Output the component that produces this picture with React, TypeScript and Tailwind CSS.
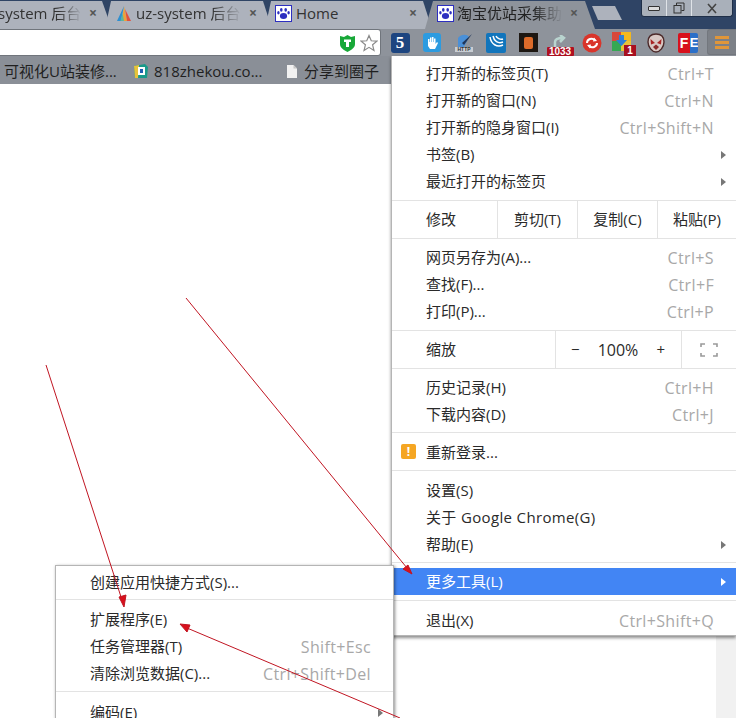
import React from "react";

const font = { fontFamily: '"Open Sans","Noto Sans CJK SC",sans-serif' };

function Row({ label, short, arrow, active, icon, wide }: { label: string; short?: string; arrow?: boolean; active?: boolean; icon?: React.ReactNode; wide?: boolean }) {
  return (
    <div className={`relative flex h-[27px] items-center pl-[34px] pr-[22px] ${active ? "bg-[#4285f4] text-white" : "text-[#2a2a2a]"}`}>
      {icon}
      <span className={`flex-1 whitespace-nowrap ${wide ? "tracking-[0.35px]" : ""}`}>{label}</span>
      {short && <span className="whitespace-nowrap text-[16px] tracking-[0.35px] text-[#a8a8a8]">{short}</span>}
      {arrow && (
        <span className={`absolute right-[10px] top-[10px] h-0 w-0 border-y-[4px] border-l-[5px] border-y-transparent ${active ? "border-l-white" : "border-l-[#777]"}`} />
      )}
    </div>
  );
}

const Sep = () => <div className="h-px bg-[#e3e3e3]" />;

function Tab({ children, cls, clip, active }: { children: React.ReactNode; cls: string; clip: string; active?: boolean }) {
  return (
    <div className={`flex h-[28px] shrink-0 items-center self-end pb-[4px] ${cls} ${clip} ${active ? "bg-[#8e939b]" : "bg-[#adb2bc]"}`}>{children}</div>
  );
}

const Close = ({ cls = "mr-[15px]" }: { cls?: string }) => <span className={`ml-auto text-[14px] font-bold leading-none text-[#555] ${cls}`}>×</span>;

const Paw = () => (
  <svg width="17" height="17" viewBox="0 0 17 17" className="shrink-0">
    <rect x="0.5" y="0.5" width="16" height="16" fill="#fff" stroke="#2d2fc0" />
    <g fill="#2d2fc0">
      <ellipse cx="8.5" cy="11" rx="3.6" ry="3" />
      <ellipse cx="6.3" cy="4.8" rx="1.3" ry="1.9" />
      <ellipse cx="10.7" cy="4.8" rx="1.3" ry="1.9" />
      <ellipse cx="3.4" cy="7.8" rx="1.2" ry="1.7" />
      <ellipse cx="13.6" cy="7.8" rx="1.2" ry="1.7" />
    </g>
  </svg>
);

function Ext({ children }: { children: React.ReactNode }) {
  return <div className="flex w-[32px] shrink-0 items-center justify-center">{children}</div>;
}

const fade = "[mask-image:linear-gradient(to_right,black_72%,transparent)]";

function App() {
  return (
    <div className="relative h-[718px] w-[736px] overflow-hidden bg-white text-[15px]" style={font}>
      {/* Tab strip */}
      <div className="relative flex h-[29px] bg-[#2f4465]">
        <Tab cls="w-[112px] z-[1]" clip="[clip-path:polygon(0_0,102px_0,112px_100%,0_100%)]">
          <span className={`ml-[-2px] w-[84px] overflow-hidden whitespace-nowrap text-[#333] ${fade}`}>system 后台</span>
          <Close />
        </Tab>
        <Tab cls="ml-[-7px] w-[167px] pl-[11px] z-[2]" clip="[clip-path:polygon(6px_0,158px_0,167px_100%,0_100%)]">
          <svg width="16" height="17" viewBox="0 0 16 17" className="shrink-0">
            <path d="M8 1 L11 16 H6 Z" fill="#eca13a" />
            <path d="M8 1 L1 16 H5 Z" fill="#2f8fd0" />
            <path d="M9 4 L15 16 H11 Z" fill="#e2503c" />
            <path d="M6.5 8 L8 16 H4.5 Z" fill="#5ab5a0" />
          </svg>
          <span className={`ml-[4px] w-[106px] overflow-hidden whitespace-nowrap text-[#333] ${fade}`}>uz-system 后台</span>
          <Close />
        </Tab>
        <Tab cls="ml-[-7px] w-[167px] pl-[10px] z-[3]" clip="[clip-path:polygon(6px_0,158px_0,167px_100%,0_100%)]">
          <Paw />
          <span className="ml-[4px] text-[#333]">Home</span>
          <Close />
        </Tab>
        <Tab active cls="ml-[-7px] w-[170px] pl-[12px] z-[4]" clip="[clip-path:polygon(8px_0,160px_0,170px_100%,0_100%)]">
          <Paw />
          <span className={`ml-[3px] w-[106px] overflow-hidden whitespace-nowrap text-[#222] ${fade}`}>淘宝优站采集助</span>
          <Close cls="mr-[17px]" />
        </Tab>
        <div className="ml-[-3px] mt-[6px] h-[14px] w-[30px] bg-[#adb2bc] [clip-path:polygon(0_0,23px_0,30px_100%,6px_100%)]" />
        <div className="ml-[19px] flex h-[17px] w-[92px] overflow-hidden rounded-b-[3px] border border-t-0 border-[#1f2f48] bg-[#a9b0ba] text-[#333]">
          <div className="flex w-[25px] items-center justify-center border-r border-[#dfe3e8]">
            <div className="h-[5px] w-[12px] rounded-[1px] border border-[#333] bg-[#ddd]" />
          </div>
          <div className="flex w-[25px] items-center justify-center border-r border-[#dfe3e8]">
            <svg width="12" height="12" viewBox="0 0 12 12" fill="none" stroke="#333"><rect x="1" y="3.5" width="7" height="7.5" /><path d="M3.5 3V1H11V8.5H8.5" /></svg>
          </div>
          <div className="flex flex-1 items-center justify-center">
            <svg width="12" height="11" viewBox="0 0 12 11" fill="none" stroke="#444" strokeWidth="1.6"><path d="M2 1 L10 10 M10 1 L2 10" /></svg>
          </div>
        </div>
      </div>

      {/* Toolbar */}
      <div className="flex h-[27px] bg-[#8e939b]">
        <div className="relative z-[5] flex h-[27px] w-[381px] shrink-0 items-center justify-end rounded-r-[3px] border border-l-0 border-[#70757c] bg-white pr-[2px]">
          <svg width="17" height="18" viewBox="0 0 17 18" className="mr-[4px]">
            <path d="M1 2 L5 3 L8.5 1 L12 3 L16 2 V10 C16 14 12 16 8.5 18 C5 16 1 14 1 10 Z" fill="#18a838" />
            <path d="M5 5.5 H12 V8 H10 V13 H7 V8 H5 Z" fill="#fff" />
          </svg>
          <svg width="18" height="18" viewBox="0 0 24 24" fill="#fff" stroke="#8a8a8a" strokeWidth="1.6">
            <path d="M12 2 L15 9 L22.5 9.5 L16.8 14.4 L18.6 22 L12 17.8 L5.4 22 L7.2 14.4 L1.5 9.5 L9 9 Z" />
          </svg>
        </div>
        <div className="ml-[3px] flex h-[27px]">
          <Ext>
            <div className="flex h-[20px] w-[19px] items-center justify-center rounded-[3px] bg-[#1d4580] text-[17px] font-bold leading-none text-white" style={{ fontFamily: '"Liberation Serif",serif' }}>5</div>
          </Ext>
          <Ext>
            <div className="flex h-[19px] w-[18px] items-center justify-center rounded-[3px] bg-[#2c9be0]">
              <svg width="12" height="14" viewBox="0 0 12 14" fill="#fff"><path d="M2 6 V3 H3.5 V6 H4 V1.5 H5.5 V6 H6 V1 H7.5 V6 H8 V2.5 H9.5 V8 L11 6 L12 7 L9 13 H4 L2 10 Z" /></svg>
            </div>
          </Ext>
          <Ext>
            <svg width="20" height="20" viewBox="0 0 20 20">
              <path d="M4 5 C7 1 13 1 15 4 L10 14 H4 Z" fill="#4a90d8" />
              <path d="M18 1 L10 12 L8 10 Z" fill="#20365a" />
              <rect x="1" y="14" width="18" height="5" fill="#c9ced4" />
              <text x="10" y="18.4" fontSize="5" fontWeight="700" textAnchor="middle" fill="#333" fontFamily="Liberation Sans">HTTP</text>
            </svg>
          </Ext>
          <Ext>
            <svg width="20" height="20" viewBox="0 0 20 20" fill="none">
              <rect width="20" height="20" rx="2" fill="#1175bc" />
              <path d="M4 4 C5 11 11 15 17 12 M7 3 C8 8 12 11 17 9 M10 3 C11 5 14 7 17 6" stroke="#fff" strokeWidth="1.5" />
            </svg>
          </Ext>
          <Ext>
            <div className="flex h-[19px] w-[19px] items-center justify-center bg-[#1d1712]">
              <div className="h-[12px] w-[9px] rounded-[2px] bg-[#dc6b2a]" />
            </div>
          </Ext>
          <Ext>
            <div className="relative h-[27px] w-[27px]">
              <svg width="18" height="14" viewBox="0 0 18 14" className="absolute left-[5px] top-[6px]" fill="none" stroke="#b9d4cf" strokeWidth="2.5">
                <path d="M3 12 V7 C3 4 6 3 11 3 M8 0 L12 3 L8 7" />
              </svg>
              <div className="absolute left-0 top-[18px] h-[9px] w-[27px] rounded-[1px] bg-[#b01020] text-center text-[10px] font-bold leading-[9px] text-white" style={{ fontFamily: '"Liberation Sans",sans-serif' }}>1033</div>
            </div>
          </Ext>
          <Ext>
            <svg width="20" height="20" viewBox="0 0 20 20" fill="none">
              <circle cx="10" cy="10" r="9.5" fill="#d9352b" />
              <path d="M5 10 C5 6 10 4.5 13 7 M15 10 C15 14 10 15.5 7 13" stroke="#fff" strokeWidth="2" />
              <path d="M12 4.5 L15 8 L11 8.5 Z M8 15.5 L5 12 L9 11.5 Z" fill="#fff" />
            </svg>
          </Ext>
          <Ext>
            <div className="relative h-[27px] w-[24px]">
              <svg width="19" height="19" viewBox="0 0 19 19" className="absolute left-0 top-[3px]">
                <rect width="10" height="10" fill="#d9483b" />
                <rect x="9" width="10" height="10" fill="#f2b81f" />
                <rect y="9" width="10" height="10" fill="#35a853" />
                <rect x="9" y="9" width="10" height="10" fill="#e8c33a" />
                <path d="M7 3 H12 V8 H15 L9.5 14 L4 8 H7 Z" fill="#2d7fd8" />
              </svg>
              <div className="absolute bottom-0 right-0 h-[11px] w-[12px] bg-[#a81020] text-center text-[10px] font-bold leading-[11px] text-white" style={{ fontFamily: '"Liberation Sans",sans-serif' }}>1</div>
            </div>
          </Ext>
          <Ext>
            <svg width="18" height="20" viewBox="0 0 18 20">
              <path d="M9 1 C14 1 17 4 17 9 C17 14 13 19 9 19 C5 19 1 14 1 9 C1 4 4 1 9 1 Z" fill="#d8c8c4" stroke="#4c2a2a" strokeWidth="1.4" />
              <path d="M3.5 6 L8 10 L4 11.5 Z M14.5 6 L10 10 L14 11.5 Z" fill="#a82424" />
              <path d="M6 14 L9 11.5 L12 14 L9 17 Z" fill="#8a2a2a" />
            </svg>
          </Ext>
          <Ext>
            <div className="flex h-[20px] w-[20px] overflow-hidden rounded-[2px]" style={{ fontFamily: '"Liberation Sans",sans-serif' }}>
              <span className="flex w-[12px] items-center justify-center bg-[#d8101c] text-[14px] font-bold leading-none text-white">F</span>
              <span className="flex w-[8px] items-center justify-center bg-[#2a6fc8] text-[13px] font-bold leading-none text-white">E</span>
            </div>
          </Ext>
        </div>
        <div className="ml-[3px] flex h-[26px] w-[29px] flex-col items-center justify-center gap-[2px] rounded-l-[3px] border border-r-0 border-[#73777e] bg-[#7c8087]">
          <div className="h-[3px] w-[14px] bg-[#e0963a]" />
          <div className="h-[3px] w-[14px] bg-[#e0963a]" />
          <div className="h-[3px] w-[14px] bg-[#e0963a]" />
        </div>
      </div>

      {/* Bookmarks */}
      <div className="flex h-[28px] items-center whitespace-nowrap bg-[#8a8f97] pt-[2px] text-[#1f1f1f]">
        <span className="ml-[4px] w-[113px] overflow-hidden">可视化U站装修...</span>
        <svg width="16" height="16" viewBox="0 0 16 16" className="ml-[16px] shrink-0">
          <path d="M1 3 L12 1 L15 4 L14 15 L2 15 Z" fill="#1a9a8a" />
          <path d="M1 3 L6 2 L5 15 L2 15 Z" fill="#e8c33a" />
          <rect x="5" y="4" width="7" height="8" fill="#fff" />
          <path d="M7 6 H10 V10 H7 Z" fill="#2060b0" />
        </svg>
        <span className="ml-[5px] w-[113px] overflow-hidden">818zhekou.co...</span>
        <svg width="10" height="13" viewBox="0 0 10 13" className="ml-[20px] shrink-0">
          <path d="M0 0 H6.5 L10 3.5 V13 H0 Z" fill="#f1f1f1" />
          <path d="M6.5 0 V3.5 H10 Z" fill="#c4c4c4" />
        </svg>
        <span className="ml-[7px]">分享到圈子</span>
      </div>

      {/* Page scrollbar visible below menu */}
      <div className="absolute bottom-0 right-0 h-[90px] w-[20px] bg-[#f1f1f1]" />

      {/* Main menu */}
      <div className="absolute right-0 top-[56px] w-[345px] border-b border-l border-[#b5b5b5] bg-white shadow-[0_2px_3px_rgba(0,0,0,0.45)]">
        <div className="pt-[4px] pb-[5px]">
          <Row label="打开新的标签页(T)" short="Ctrl+T" />
          <Row label="打开新的窗口(N)" short="Ctrl+N" />
          <Row label="打开新的隐身窗口(I)" short="Ctrl+Shift+N" />
          <Row label="书签(B)" arrow />
          <Row label="最近打开的标签页" arrow />
        </div>
        <Sep />
        <div className="flex h-[37px] items-center text-[#2a2a2a]">
          <span className="w-[105px] pl-[34px]">修改</span>
          <span className="flex h-full w-[80px] items-center justify-center border-l border-[#e3e3e3]">剪切(T)</span>
          <span className="flex h-full w-[80px] items-center justify-center border-l border-[#e3e3e3]">复制(C)</span>
          <span className="flex h-full flex-1 items-center justify-center border-l border-[#e3e3e3]">粘贴(P)</span>
        </div>
        <Sep />
        <div className="pt-[5px] pb-[5px]">
          <Row label="网页另存为(A)..." short="Ctrl+S" />
          <Row label="查找(F)..." short="Ctrl+F" />
          <Row label="打印(P)..." short="Ctrl+P" />
        </div>
        <Sep />
        <div className="flex h-[37px] items-center text-[#2a2a2a]">
          <span className="w-[163px] pl-[34px]">缩放</span>
          <span className="flex h-full w-[126px] items-center justify-between border-l border-[#e3e3e3] pl-[15px] pr-[16px]">
            <span>−</span>
            <span className="text-[16px]">100%</span>
            <span>+</span>
          </span>
          <span className="flex h-full flex-1 items-center justify-center border-l border-[#e3e3e3]">
            <svg width="18" height="14" viewBox="0 0 18 14" fill="none" stroke="#9a9a9a" strokeWidth="1.6">
              <path d="M1 4 V1 H5 M13 1 H17 V4 M17 10 V13 H13 M5 13 H1 V10" />
            </svg>
          </span>
        </div>
        <Sep />
        <div className="pt-[5px] pb-[4px]">
          <Row label="历史记录(H)" short="Ctrl+H" />
          <Row label="下载内容(D)" short="Ctrl+J" />
        </div>
        <Sep />
        <div className="pt-[6px] pb-[4px]">
          <Row
            label="重新登录..."
            icon={
              <span className="absolute left-[9px] top-[5px] flex h-[15px] w-[15px] items-center justify-center rounded-[2px] bg-[#f5a623] text-[12px] font-bold leading-none text-white">!</span>
            }
          />
        </div>
        <Sep />
        <div className="pt-[6px] pb-[4px]">
          <Row label="设置(S)" />
          <Row wide label="关于 Google Chrome(G)" />
          <Row label="帮助(E)" arrow />
        </div>
        <Sep />
        <div className="pt-[5px] pb-[5px]">
          <Row active label="更多工具(L)" arrow />
        </div>
        <Sep />
        <div className="pt-[6px] pb-[1px]">
          <Row label="退出(X)" short="Ctrl+Shift+Q" />
        </div>
      </div>

      {/* Submenu */}
      <div className="absolute left-[55px] top-[565px] h-[160px] w-[339px] border border-[#b5b5b5] bg-white shadow-[1px_1px_3px_rgba(0,0,0,0.45)]">
        <div className="pt-[3px] pb-[3px]">
          <Row label="创建应用快捷方式(S)..." />
        </div>
        <Sep />
        <div className="pt-[6px] pb-[4px]">
          <Row label="扩展程序(E)" />
          <Row label="任务管理器(T)" short="Shift+Esc" />
          <Row label="清除浏览数据(C)..." short="Ctrl+Shift+Del" />
        </div>
        <Sep />
        <div className="pt-[7px]">
          <Row label="编码(E)" arrow />
        </div>
      </div>

      {/* Annotation arrows */}
      <svg width="736" height="718" viewBox="0 0 736 718" className="pointer-events-none absolute left-0 top-0">
        <g stroke="#c01522" strokeWidth="1" fill="#d8101c">
          <line x1="186" y1="298" x2="407" y2="568" />
          <path d="M412 574 L403 569 L408 565 Z" />
          <line x1="46" y1="365" x2="122" y2="600" />
          <path d="M124 607 L119 597 L126 595 Z" />
          <line x1="400" y1="718" x2="187" y2="628" />
          <path d="M180 624 L190 625 L187 632 Z" />
        </g>
      </svg>
    </div>
  );
}

export default App;
